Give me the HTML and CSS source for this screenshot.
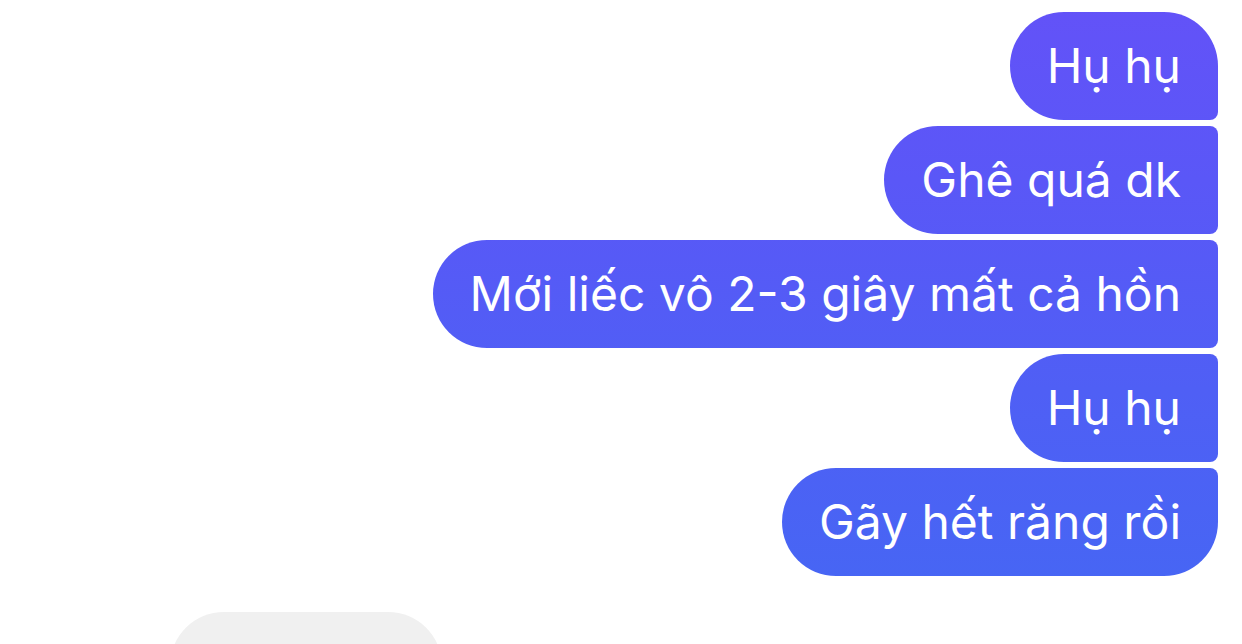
FILE: index.html
```html
<!DOCTYPE html>
<html lang="vi">

<head>
    <meta charset="UTF-8">
    <meta name="viewport" content="width=device-width, initial-scale=1.0">
    <title>Chat</title>
    <link rel="stylesheet" href="styles.css">
</head>

<body>
    <div class="thread">
        <div class="group mine">
            <div class="bubble first">Hụ hụ</div>
            <div class="bubble">Ghê quá dk</div>
            <div class="bubble">Mới liếc vô 2-3 giây mất cả hồn</div>
            <div class="bubble">Hụ hụ</div>
            <div class="bubble last">Gãy hết răng rồi</div>
        </div>

        <div class="group theirs">
            <div class="bubble first"></div>
        </div>
    </div>
</body>

</html>
```

FILE: styles.css
```css
body {
    margin: 0;
    padding: 0;
    background-color: #fff;
    font-family: Inter, "Noto Sans", sans-serif;
}

.thread {
    height: 644px;
    box-sizing: border-box;
    overflow: hidden;
    padding: 12px 24px 0 170px;
    display: flex;
    flex-direction: column;
    gap: 36px;
}

.group {
    display: flex;
    flex-direction: column;
    gap: 6px;
    flex-shrink: 0;
}

.mine {
    align-items: flex-end;
}

.theirs {
    align-items: flex-start;
}

.bubble {
    height: 108px;
    line-height: 108px;
    padding: 0 37px 0 37px;
    font-size: 48px;
    white-space: nowrap;
    color: #fff;
    border-radius: 54px 8px 8px 54px;
}

.mine .bubble {
    background-image: linear-gradient(to bottom, #6352f8 0%, #5a57f7 30%, #4f5ff5 65%, #4666f4 100%);
    background-attachment: fixed;
    background-size: 100% 600px;
}

.mine .bubble.first {
    border-top-right-radius: 54px;
}

.mine .bubble.last {
    border-bottom-right-radius: 54px;
}

.theirs .bubble {
    width: 272px;
    padding: 0;
    background-color: #f0f0f0;
    border-radius: 54px;
}
```
